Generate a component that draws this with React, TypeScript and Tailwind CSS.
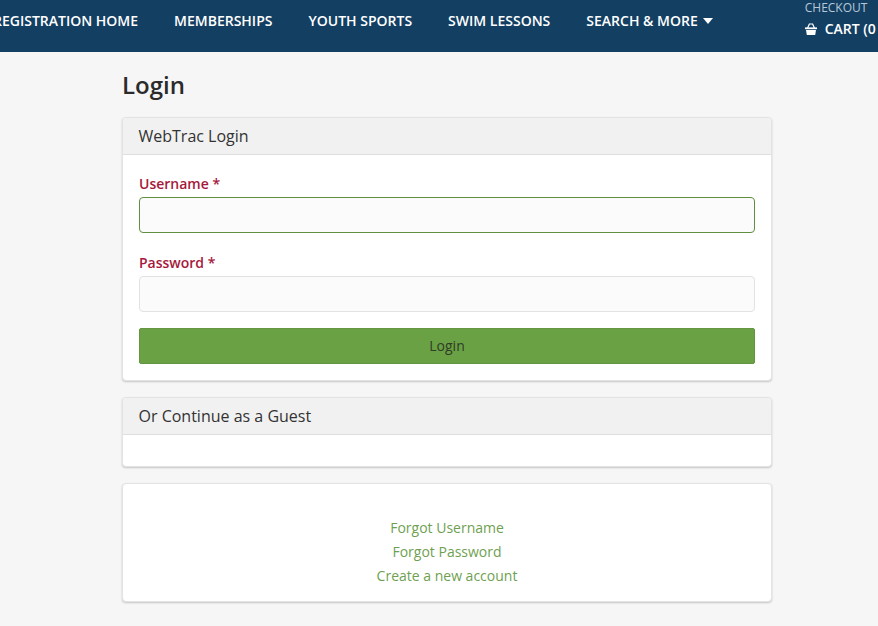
const NAV_ITEMS = ['REGISTRATION HOME', 'MEMBERSHIPS', 'YOUTH SPORTS', 'SWIM LESSONS'];

function BasketIcon() {
    return (
        <svg width="12" height="12" viewBox="0 0 12 12" fill="none" className="shrink-0">
            <path d="M2.6 5 L4.4 1 M9.4 5 L7.6 1 M4 1 H8" stroke="white" strokeWidth="1.2" />
            <rect x="0" y="4.4" width="12" height="1.8" fill="white" />
            <path d="M1 7 H11 L10.2 12 H1.8 Z" fill="white" />
        </svg>
    );
}

function Field({ label, focused }: { label: string; focused?: boolean }) {
    return (
        <div className="mb-[16px]">
            <label className="block text-[14px] leading-[20px] font-[550] text-[#a6193c] mb-[3px]">{label} *</label>
            <input
                type="text"
                className={`block w-full h-[36px] rounded-[4px] border bg-[#fbfbfb] outline-none ${focused ? 'border-[#5f8f3f]' : 'border-[#e2e2e2]'}`}
            />
        </div>
    );
}

function Panel({ title, children }: { title?: string; children: React.ReactNode }) {
    return (
        <section className="rounded-[4px] border border-[#e3e3e3] bg-white shadow-[0_1px_2px_rgba(0,0,0,0.2)]">
            {title && (
                <h2 className="h-[37px] px-[15.5px] flex items-center text-[16px] text-[#333] bg-[#f1f1f1] border-b border-[#dedede] rounded-t-[4px]">
                    {title}
                </h2>
            )}
            {children}
        </section>
    );
}

export default function App() {
    return (
        <div className="w-[878px] h-[626px] overflow-hidden bg-[#f6f6f6] font-['Open_Sans',sans-serif]">
            {/* Top nav */}
            <nav className="h-[52px] bg-[#133f63] flex items-center text-white text-[14px] font-semibold whitespace-nowrap pb-[11px]">
                <ul className="flex items-center gap-[36px] -ml-[7px]">
                    {NAV_ITEMS.map((item) => (
                        <li key={item}>{item}</li>
                    ))}
                    <li className="flex items-center gap-[5px]">
                        SEARCH &amp; MORE
                        <span className="w-0 h-0 border-x-[5px] border-x-transparent border-t-[6px] border-t-white" />
                    </li>
                </ul>
                <div className="ml-[92px] w-[100px] shrink-0 self-start">
                    <div className="text-[12px] leading-[16px] font-normal text-[#b9c8d6]">CHECKOUT</div>
                    <div className="flex items-center gap-[8px] mt-[3px] leading-[20px]">
                        <BasketIcon />
                        CART (0
                    </div>
                </div>
            </nav>

            <main className="w-[650px] ml-[122px]">
                <h1 className="text-[24px] leading-[32px] font-[550] text-[#2b2b2b] mt-[17px] mb-[16px]">Login</h1>

                <Panel title="WebTrac Login">
                    <div className="px-[16px] pt-[19px] pb-[16px]">
                        <Field label="Username" focused />
                        <div className="h-[4px]" />
                        <Field label="Password" />
                        <button className="block w-full h-[36px] rounded-[2px] bg-[#6aa144] border border-[#63963f] text-[14px] text-[#2f3d27] pb-[2px]">
                            Login
                        </button>
                    </div>
                </Panel>

                <div className="mt-[16px]">
                    <Panel title="Or Continue as a Guest">
                        <div className="h-[31px]" />
                    </Panel>
                </div>

                <div className="mt-[16px]">
                    <Panel>
                        <div className="pt-[32px] pb-[13px] flex flex-col items-center text-[14px] leading-[24px] text-[#6f9f52]">
                            <a>Forgot Username</a>
                            <a>Forgot Password</a>
                            <a>Create a new account</a>
                        </div>
                    </Panel>
                </div>
            </main>
        </div>
    );
}
